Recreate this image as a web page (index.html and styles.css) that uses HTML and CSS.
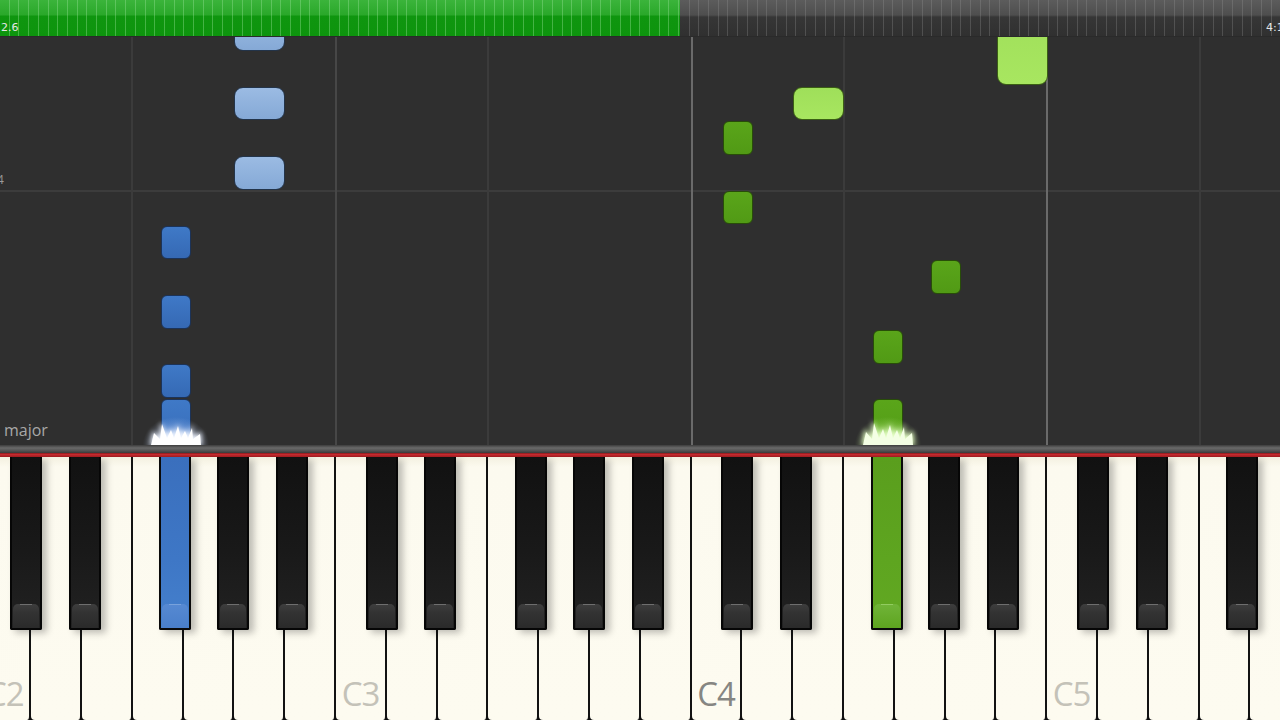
FILE: index.html
```html
<!DOCTYPE html>
<html>
<head>
<meta charset="utf-8">
<title>Piano roll</title>
<link rel="stylesheet" href="styles.css">
</head>
<body>
<div class="app">
  <div class="progress">
    <div class="done"></div>
    <div class="rest"></div>
    <span class="time time-left">2.6</span>
    <span class="time time-right">4:1</span>
  </div>

  <div class="roll">
    <div class="hline" style="top:153px"></div>
    <div class="vline" style="left:131px"></div>
    <div class="vline mid" style="left:335px"></div>
    <div class="vline" style="left:487px"></div>
    <div class="vline strong" style="left:691px"></div>
    <div class="vline" style="left:843px"></div>
    <div class="vline strong" style="left:1046px"></div>
    <div class="vline" style="left:1199px"></div>

    <span class="measure">4</span>
    <span class="keysig">major</span>

    <div class="note white blue" style="left:234px;top:-20px;height:34px"></div>
    <div class="note white blue" style="left:234px;top:50px;height:33px"></div>
    <div class="note white blue" style="left:234px;top:119px;height:34px"></div>
    <div class="note black blue" style="left:161px;top:189px;height:33px"></div>
    <div class="note black blue" style="left:161px;top:258px;height:34px"></div>
    <div class="note black blue" style="left:161px;top:327px;height:34px"></div>
    <div class="note black blue" style="left:161px;top:362px;height:60px"></div>

    <div class="note white green" style="left:997px;top:-30px;height:78px"></div>
    <div class="note white green" style="left:793px;top:50px;height:33px"></div>
    <div class="note black green" style="left:723px;top:84px;height:34px"></div>
    <div class="note black green" style="left:723px;top:154px;height:33px"></div>
    <div class="note black green" style="left:931px;top:223px;height:34px"></div>
    <div class="note black green" style="left:873px;top:293px;height:34px"></div>
    <div class="note black green" style="left:873px;top:362px;height:60px"></div>

    <div class="glow glow-blue"></div>
    <div class="glow glow-green"></div>

    <svg class="flare flare-blue" viewBox="0 0 64 40" width="64" height="40">
      <defs>
        <filter id="fb" x="-50%" y="-50%" width="200%" height="200%"><feGaussianBlur stdDeviation="2.5"/></filter>
        <filter id="fb2" x="-20%" y="-20%" width="140%" height="140%"><feGaussianBlur stdDeviation="0.5"/></filter>
      </defs>
      <polygon filter="url(#fb)" fill="#f0f5ff" points="6,40 9,26 15,32 17,17 23,30 27,22 30,30 34,19 37,29 41,23 44,30 48,20 49,31 57,27 58,40"/>
      <polygon filter="url(#fb2)" fill="#ffffff" points="7,40 10,28 16,34 18,19 23,33 27,25 30,33 34,21 37,33 41,26 44,33 48,23 49,34 56,29 57,40"/>
    </svg>
    <svg class="flare flare-green" viewBox="0 0 64 40" width="64" height="40">
      <defs>
        <filter id="fg" x="-50%" y="-50%" width="200%" height="200%"><feGaussianBlur stdDeviation="2.5"/></filter>
        <filter id="fg2" x="-20%" y="-20%" width="140%" height="140%"><feGaussianBlur stdDeviation="0.5"/></filter>
      </defs>
      <polygon filter="url(#fg)" fill="#e6ffc8" points="6,40 9,24 15,32 17,15 23,30 27,21 30,30 34,18 37,29 41,22 44,30 48,19 49,31 57,26 58,40"/>
      <polygon filter="url(#fg2)" fill="#f4ffe4" points="7,40 10,27 16,34 18,18 23,33 27,24 30,33 34,20 37,33 41,25 44,33 48,22 49,34 56,28 57,40"/>
    </svg>
  </div>

  <div class="rail"></div>

  <div class="keyboard">
    <div class="keys">
      <div class="wk"><div class="bk cs"></div><span class="label">C2</span></div>
      <div class="wk"><div class="bk ds"></div></div>
      <div class="wk"></div>
      <div class="wk"><div class="bk fs pressed-blue"></div></div>
      <div class="wk"><div class="bk gs"></div></div>
      <div class="wk"><div class="bk as"></div></div>
      <div class="wk"></div>

      <div class="wk"><div class="bk cs"></div><span class="label">C3</span></div>
      <div class="wk"><div class="bk ds"></div></div>
      <div class="wk"></div>
      <div class="wk"><div class="bk fs"></div></div>
      <div class="wk"><div class="bk gs"></div></div>
      <div class="wk"><div class="bk as"></div></div>
      <div class="wk"></div>

      <div class="wk"><div class="bk cs"></div><span class="label mid">C4</span></div>
      <div class="wk"><div class="bk ds"></div></div>
      <div class="wk"></div>
      <div class="wk"><div class="bk fs pressed-green"></div></div>
      <div class="wk"><div class="bk gs"></div></div>
      <div class="wk"><div class="bk as"></div></div>
      <div class="wk"></div>

      <div class="wk"><div class="bk cs"></div><span class="label">C5</span></div>
      <div class="wk"><div class="bk ds"></div></div>
      <div class="wk"></div>
      <div class="wk"><div class="bk fs"></div></div>
      <div class="wk"><div class="bk gs"></div></div>
    </div>
  </div>
</div>
</body>
</html>
```

FILE: styles.css
```css
* { box-sizing: border-box; }
html, body {
  margin: 0;
  padding: 0;
  width: 1280px;
  height: 720px;
  overflow: hidden;
  background: #2f2f2f;
  font-family: "Open Sans", "Noto Sans", "Liberation Sans", sans-serif;
}
.app {
  width: 1280px;
  height: 720px;
  display: flex;
  flex-direction: column;
}

/* progress bar */
.progress {
  position: relative;
  height: 37px;
  flex: 0 0 37px;
  display: flex;
  border-bottom: 1px solid #2a2a2a;
}
.done {
  width: 680px;
  background:
    repeating-linear-gradient(90deg, transparent 0, transparent 8.7px, rgba(150,225,150,0.4) 8.7px, rgba(150,225,150,0.4) 9.7px),
    linear-gradient(180deg, #3bb43b 0, #2aa82a 15px, #0f960f 16px, #0d940d 100%);
}
.rest {
  flex: 1;
  background:
    repeating-linear-gradient(90deg, transparent 0, transparent 8.7px, rgba(150,150,150,0.3) 8.7px, rgba(150,150,150,0.3) 9.7px),
    linear-gradient(180deg, #5c5c5c 0, #4e4e4e 15px, #363636 17px, #303030 100%);
}
.time {
  position: absolute;
  bottom: 2px;
  font-size: 11px;
  line-height: 12px;
  color: #e6e6e6;
  font-family: "DejaVu Sans", sans-serif;
}
.time-left { left: 1px; }
.time-right { left: 1266px; }

/* note roll */
.roll {
  position: relative;
  flex: 0 0 408px;
  overflow: hidden;
  background: #2f2f2f;
}
.hline {
  position: absolute;
  left: 0;
  right: 0;
  height: 2px;
  background: #3c3c3c;
}
.vline {
  position: absolute;
  top: 0;
  bottom: 0;
  width: 2px;
  background: #3b3b3b;
}
.vline.mid { background: #474747; }
.vline.strong { background: #6a6a6a; }
.measure {
  position: absolute;
  left: -3px;
  top: 134px;
  font-size: 12px;
  color: #9a9a9a;
}
.keysig {
  position: absolute;
  left: 4px;
  top: 382px;
  font-size: 16px;
  color: #a8a8a8;
}
.note {
  position: absolute;
  border: 1.5px solid #1c2a3c;
}
.note.white { width: 51px; border-radius: 9px; }
.note.black { width: 30px; border-radius: 6px; }
.note.white.blue { background: linear-gradient(180deg, #9bbbe3, #85a9d6); border-color: #23344a; }
.note.black.blue { background: linear-gradient(180deg, #3f79c7, #3569b4); border-color: #1c3358; }
.note.white.green { background: linear-gradient(180deg, #9fdf5a, #a8e660); border-color: #3b5f14; }
.note.black.green { background: linear-gradient(180deg, #5aa51a, #519a15); border-color: #284d08; }

.glow {
  position: absolute;
  top: 376px;
  width: 76px;
  height: 64px;
  border-radius: 50%;
}
.glow-blue {
  left: 138px;
  background: radial-gradient(ellipse at 50% 50%, rgba(235,242,255,0.75) 0, rgba(190,212,255,0.35) 35%, rgba(150,185,255,0) 62%);
}
.glow-green {
  left: 850px;
  background: radial-gradient(ellipse at 50% 50%, rgba(240,255,220,0.75) 0, rgba(200,245,150,0.35) 35%, rgba(160,230,90,0) 62%);
}
.flare {
  position: absolute;
  top: 368px;
  overflow: visible;
}
.flare-blue { left: 144px; }
.flare-green { left: 856px; }

/* rail between roll and keyboard */
.rail {
  flex: 0 0 12px;
  background: linear-gradient(180deg, #3c3c3c 0, #6a6a6a 3px, #505050 6px, #3a3a3a 8px, #8a1a1e 8px, #c42a2e 9.5px, #9c1c20 12px);
}

/* keyboard */
.keyboard {
  flex: 1;
  position: relative;
  overflow: hidden;
  background: #0e0e0e;
}
.keys {
  display: flex;
  height: 100%;
  margin-left: -19.5px;
}
.wk {
  position: relative;
  flex: 0 0 50.8px;
  height: 100%;
  background: linear-gradient(180deg, #f3f0e0 0, #fcfaef 10px, #fdfbf0 100%);
  border-right: 2px solid #121212;
  border-radius: 0 0 4px 4px;
}
.label {
  position: absolute;
  left: 0;
  right: 0;
  bottom: 8px;
  text-align: center;
  font-size: 33px;
  line-height: 36px;
  letter-spacing: -1px;
  color: #c4c2b8;
}
.label.mid { color: #868682; }

.bk {
  position: absolute;
  top: 0;
  width: 32px;
  height: 173px;
  z-index: 2;
  border: 2px solid #060606;
  border-top: 0;
  border-radius: 0 0 2px 2px;
  background: linear-gradient(180deg, #111 0, #191919 55%, #222 100%);
  box-shadow: 5px 3px 7px rgba(0,0,0,0.25);
}
.bk::after {
  content: "";
  position: absolute;
  left: 1px;
  right: 1px;
  bottom: 0;
  height: 24px;
  background: linear-gradient(180deg, #3e3e3e 0, #333 35%, #2a2a2a 100%);
  border-radius: 5px 5px 0 0;
}
.bk::before {
  content: "";
  position: absolute;
  left: 8px;
  right: 8px;
  bottom: 23px;
  height: 1px;
  z-index: 1;
  background: #6e6e6e;
}
.bk.cs { left: 29.5px; }
.bk.ds { left: 37.5px; }
.bk.fs { left: 26.5px; }
.bk.gs { left: 33.5px; }
.bk.as { left: 41.5px; }

.bk.pressed-blue {
  background: linear-gradient(180deg, #3a6fbd 0, #3e77c6 60%, #4580cc 100%);
  border-color: #0a0a0a;
}
.bk.pressed-blue::after {
  background: linear-gradient(180deg, #5689d2 0, #4a7fca 100%);
}
.bk.pressed-blue::before { background: #78a2dc; }
.bk.pressed-green {
  background: linear-gradient(180deg, #5a9e1d 0, #5ea520 60%, #62a822 100%);
  border-color: #0a0a0a;
}
.bk.pressed-green::after {
  background: linear-gradient(180deg, #70b438 0, #5ea420 100%);
}
.bk.pressed-green::before { background: #92cc60; }
```
